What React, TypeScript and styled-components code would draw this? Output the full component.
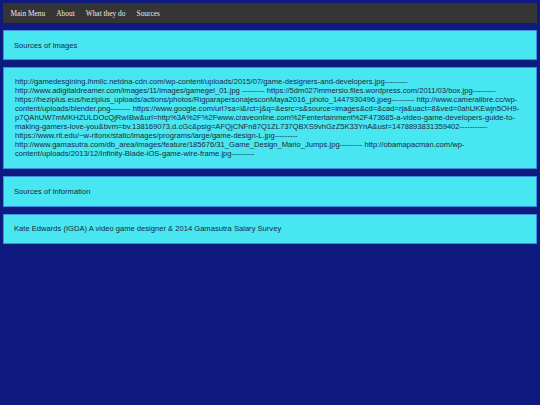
import React from "react";
import styled, { createGlobalStyle } from "styled-components";

const GlobalStyle = createGlobalStyle`
  html, body {
    margin: 0;
    padding: 0;
    background-color: #0e1a7e;
  }
  body {
    min-height: 405px;
  }
`;

const Page = styled.div`
  display: flex;
  flex-direction: column;
  gap: 7px;
  padding: 3px 3px 0 3px;
`;

const NavBar = styled.nav`
  display: flex;
  align-items: center;
  height: 20px;
  background-color: #353535;
  padding: 0 0 0 3px;
  font-family: "Liberation Serif", "Times New Roman", serif;
  font-size: 7.4px;
  color: #e8e8e8;
`;

const NavLink = styled.a`
  padding: 0 6.5px 0 4.5px;
  color: inherit;
  text-decoration: none;
  cursor: pointer;
`;

const Panel = styled.section<{ $tall?: boolean }>`
  box-sizing: border-box;
  background-color: #48e6f1;
  border: 1px solid #3a8fe0;
  padding: ${(p) => (p.$tall ? "9px 11px 10px" : "0 10px")};
  min-height: 30.4px;
  display: flex;
  align-items: ${(p) => (p.$tall ? "flex-start" : "center")};
  font-family: "Liberation Sans", Arial, sans-serif;
  font-size: 7.6px;
  line-height: 9px;
  color: #1c2a3a;
  p {
    margin: 0;
    overflow-wrap: break-word;
  }
`;

const links = [
  "http://gamedesgining.lhmllc.netdna-cdn.com/wp-content/uploads/2015/07/game-designers-and-developers.jpg---------",
  "http://www.adigitaldreamer.com/images/11/images/gamegel_01.jpg ---------",
  "https://5dm027immersio.files.wordpress.com/2011/03/box.jpg---------",
  "https://heziplus.eus/heziplus_uploads/actions/photos/RigparapersonajesconMaya2016_photo_1447930496.jpeg---------",
  "http://www.cameralibre.cc/wp-content/uploads/blender.png--------",
  "https://www.google.com/url?sa=i&rct=j&q=&esrc=s&source=images&cd=&cad=rja&uact=8&ved=0ahUKEwjn5OH9-p7QAhUW7mMKHZULDOcQjRwIBw&url=http%3A%2F%2Fwww.craveonline.com%2Fentertainment%2F473685-a-video-game-developers-guide-to-making-gamers-love-you&bvm=bv.138169073,d.cGc&psig=AFQjCNFn87Q1ZL737QBXS9vhGzZ5K33YnA&ust=1478893831359402-----------",
  "https://www.rit.edu/~w-ritonx/static/images/programs/large/game-design-L.jpg---------",
  "http://www.gamasutra.com/db_area/images/feature/185676/31_Game_Design_Mario_Jumps.jpg---------",
  "http://obamapacman.com/wp-content/uploads/2013/12/Infinity-Blade-iOS-game-wire-frame.jpg---------",
];

const App = () => {
  return (
    <>
      <GlobalStyle />
      <Page>
        <NavBar>
          <NavLink>Main Menu</NavLink>
          <NavLink>About</NavLink>
          <NavLink>What they do</NavLink>
          <NavLink>Sources</NavLink>
        </NavBar>
        <Panel>
          <p>Sources of Images</p>
        </Panel>
        <Panel $tall>
          <p>{links.join(" ")}</p>
        </Panel>
        <Panel>
          <p>Sources of Information</p>
        </Panel>
        <Panel>
          <p>Kate Edwards (IGDA) A video game designer &amp; 2014 Gamasutra Salary Survey</p>
        </Panel>
      </Page>
    </>
  );
};

export default App;
